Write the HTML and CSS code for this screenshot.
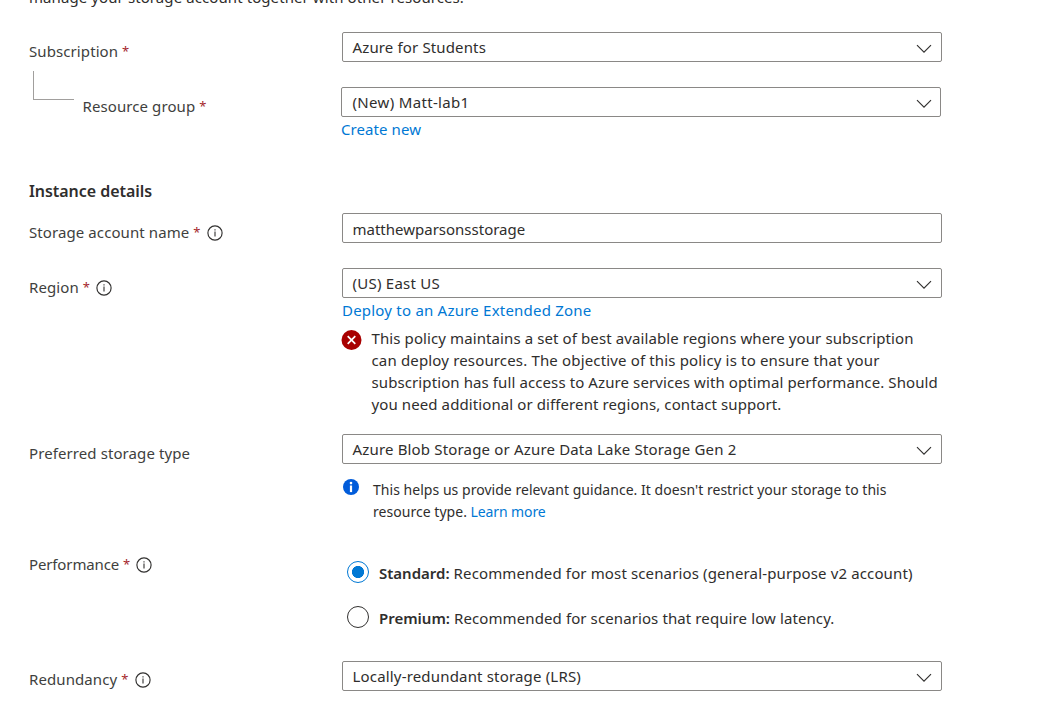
FILE: index.html
```html
<!DOCTYPE html>
<html lang="en">
<head>
<meta charset="utf-8">
<title>Create a storage account</title>
<link rel="stylesheet" href="styles.css">
</head>
<body>
<svg class="sprite" aria-hidden="true">
  <symbol id="chevron" viewBox="0 0 16 10"><path d="M1 1.2 8 8.2 15 1.2" fill="none" stroke="#323130" stroke-width="1.15"/></symbol>
  <symbol id="info" viewBox="0 0 16 16"><circle cx="8" cy="8" r="7.1" fill="none" stroke="#323130" stroke-width="1.15"/><path d="M8 6.6V11.4M8 4.3V5.5" stroke="#323130" stroke-width="1.1"/></symbol>
</svg>
<main class="form">
  <p class="intro">manage your storage account together with other resources.</p>

  <div class="row subscription">
    <label class="label">Subscription <b class="req">*</b></label>
    <div class="select"><span class="t-students">Azure for Students</span><svg class="chevron"><use href="#chevron"/></svg></div>
  </div>

  <div class="row group">
    <div class="nested"><span class="branch"></span><label class="label">Resource group <b class="req">*</b></label></div>
    <div class="field">
      <div class="select"><span class="t-group">(New) Matt-lab1</span><svg class="chevron"><use href="#chevron"/></svg></div>
      <a class="link t-create">Create new</a>
    </div>
  </div>

  <h2 class="heading">Instance details</h2>

  <div class="row name">
    <label class="label">Storage account name <b class="req">*</b><svg class="info"><use href="#info"/></svg></label>
    <div class="select input"><span>matthewparsonsstorage</span></div>
  </div>

  <div class="row region">
    <label class="label">Region <b class="req">*</b><svg class="info"><use href="#info"/></svg></label>
    <div class="field">
      <div class="select"><span class="t-region">(US) East US</span><svg class="chevron"><use href="#chevron"/></svg></div>
      <a class="link t-deploy">Deploy to an Azure Extended Zone</a>
      <div class="error">
        <svg class="error-icon" viewBox="0 0 20 20"><circle cx="10" cy="10" r="10" fill="#a80000"/><path d="M6.2 6.2 13.8 13.8M13.8 6.2 6.2 13.8" stroke="#fff" stroke-width="1.7"/></svg>
        <p class="error-text">This policy maintains a set of best available regions where your subscription<br><span class="t-deploy-line">can deploy resources. The objective of this policy is to ensure that your</span><br>subscription has full access to Azure services with optimal performance. Should<br>you need additional or different regions, contact support.</p>
      </div>
    </div>
  </div>

  <div class="row type">
    <label class="label">Preferred storage type</label>
    <div class="field">
      <div class="select"><span class="t-type">Azure Blob Storage or Azure Data Lake Storage Gen 2</span><svg class="chevron"><use href="#chevron"/></svg></div>
      <div class="hint">
        <svg class="hint-icon" viewBox="0 0 16 16"><circle cx="8" cy="8" r="8" fill="#015cda"/><rect x="6.9" y="6.5" width="2.2" height="6.6" fill="#fff"/><circle cx="8" cy="4.1" r="1.3" fill="#fff"/></svg>
        <p class="hint-text">This helps us provide relevant guidance. It doesn't restrict your storage to this<br>resource type. <a class="learn">Learn more</a></p>
      </div>
    </div>
  </div>

  <div class="row performance">
    <label class="label t-perf">Performance <b class="req">*</b><svg class="info"><use href="#info"/></svg></label>
    <div class="radios">
      <div class="radio"><span class="dot checked"></span><span class="t-standard"><strong>Standard:</strong> Recommended for most scenarios (general-purpose v2 account)</span></div>
      <div class="radio"><span class="dot"></span><span class="t-premium"><strong>Premium:</strong> Recommended for scenarios that require low latency.</span></div>
    </div>
  </div>

  <div class="row redundancy">
    <label class="label">Redundancy <b class="req">*</b><svg class="info"><use href="#info"/></svg></label>
    <div class="select"><span class="t-lrs">Locally-redundant storage (LRS)</span><svg class="chevron"><use href="#chevron"/></svg></div>
  </div>
</main>
</body>
</html>
```
FILE: styles.css
```css
* { box-sizing: border-box; }
body {
  margin: 0;
  height: 710px;
  overflow: hidden;
  background: #fff;
  color: #2f2e2d;
  font: 15px/22px "Noto Sans", "Open Sans", sans-serif;
  letter-spacing: 0.09px;
}
p, h2 { margin: 0; white-space: nowrap; }
.sprite { display: none; }
.form { display: flex; flex-direction: column; padding-left: 29px; }
.intro { margin-top: -14px; height: 46px; }

.row { display: grid; grid-template-columns: 313px 600px; align-items: start; }
.subscription { height: 55px; }
.group { height: 93px; }
.name { height: 55px; }
.region { height: 166px; }
.type { height: 111px; }
.performance { height: 116px; }
.heading { height: 33px; font-size: 16px; font-weight: 600; letter-spacing: -0.05px; }

.label { display: flex; align-items: center; padding-top: 8px; color: #403f3e; white-space: pre; }
.redundancy .label { padding-top: 7px; }
.req { width: 7px; color: #a4262c; font-size: 13px; font-weight: 400; }
.info { width: 16px; height: 16px; margin: 2px 0 0 6.5px; }
.nested { display: flex; align-items: start; padding-left: 4px; margin-top: -16px; }
.branch { width: 41px; height: 29px; margin: 0 8.5px 0 0; border: solid #a19f9d; border-width: 0 0 1px 1px; }
.nested .label { padding-top: 24px; }

.select {
  display: flex;
  align-items: center;
  justify-content: space-between;
  height: 30px;
  padding: 0 9px 0 9.5px;
  border: 1px solid #8a8886;
  border-radius: 2px;
  white-space: nowrap;
}
.input { padding-top: 1px; letter-spacing: 0; }
.group .field { margin-left: -1px; }
.group .select { width: 600px; padding: 0 8px 0 10.5px; }
.chevron { width: 16px; height: 10px; margin-top: 3px; }
.link { display: block; margin-top: 1px; color: #0078d4; }
.learn { color: #0078d4; letter-spacing: -0.11px; }

.error { display: flex; margin-top: 7px; margin-left: -1px; }
.error-icon { width: 21px; height: 20px; margin: 2px 9.5px 0 0; flex: none; }
.error-text { letter-spacing: 0.1px; margin-top: -1px; }
.hint { display: flex; margin-top: 15px; padding-left: 1px; font-size: 14px; letter-spacing: 0.035px; }
.hint-icon { width: 16px; height: 16px; margin: 0 14px 0 0; flex: none; }

.radios { padding: 16px 0 0 5px; }
.radio { display: flex; height: 45px; white-space: nowrap; }
.dot { width: 22px; height: 22px; margin-right: 10px; border: 1px solid #323130; border-radius: 50%; }
.dot.checked { border-color: #0078d4; background: radial-gradient(circle, #0078d4 5.7px, #fff 6.4px); }
.radio strong { font-weight: 600; letter-spacing: 0; }
.radio > span:last-child { padding-top: 1px; }

.t-students { letter-spacing: 0.14px; }
.t-group { letter-spacing: 0.33px; }
.t-create { letter-spacing: 0.075px; }
.t-region { letter-spacing: 0.245px; }
.t-deploy { letter-spacing: 0.216px; }
.t-deploy-line { letter-spacing: 0.158px; }
.t-type { letter-spacing: 0.168px; }
.t-perf { letter-spacing: -0.13px; }
.t-standard { letter-spacing: 0.131px; }
.t-premium { letter-spacing: 0.104px; }
.t-lrs { letter-spacing: 0.173px; }
```
